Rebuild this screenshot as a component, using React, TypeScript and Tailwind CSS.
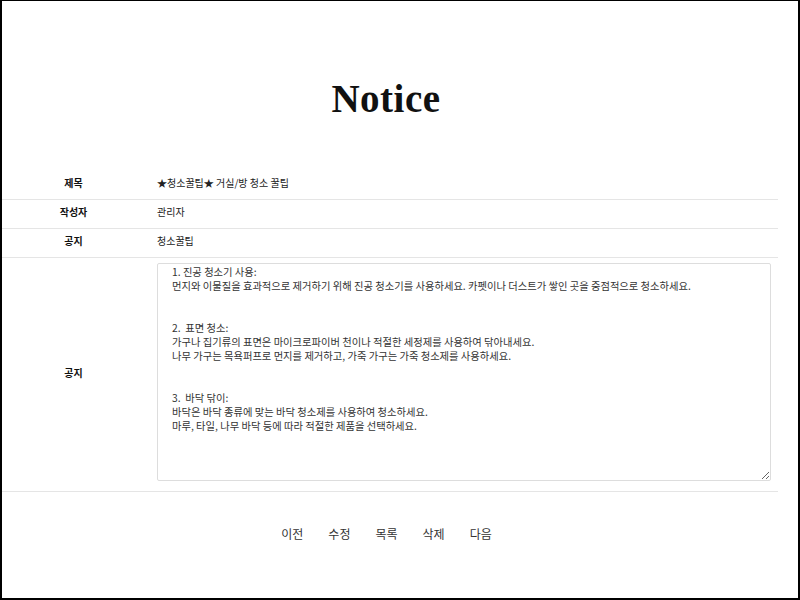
import React from 'react';

const content = `1. 진공 청소기 사용:
먼지와 이물질을 효과적으로 제거하기 위해 진공 청소기를 사용하세요. 카펫이나 더스트가 쌓인 곳을 중점적으로 청소하세요.


2.  표면 청소:
가구나 집기류의 표면은 마이크로파이버 천이나 적절한 세정제를 사용하여 닦아내세요.
나무 가구는 목욕퍼프로 먼지를 제거하고, 가죽 가구는 가죽 청소제를 사용하세요.


3.  바닥 닦이:
바닥은 바닥 종류에 맞는 바닥 청소제를 사용하여 청소하세요.
마루, 타일, 나무 바닥 등에 따라 적절한 제품을 선택하세요.`;

const kr = "font-['Noto_Sans_CJK_KR',sans-serif]";

function Row({ label, children, h = 'h-[29px]' }: { label: string; children: React.ReactNode; h?: string }) {
  return (
    <div className={`flex items-center ${h} pb-[5px] border-b border-[#e5e5e5]`}>
      <div className="w-[143px] text-center text-[10px] font-bold text-[#111]">{label}</div>
      <div className="pl-[12px] text-[10px] text-[#222]">{children}</div>
    </div>
  );
}

export default function App() {
  return (
    <div className={`h-[600px] w-[800px] bg-white border-t border-l-2 border-r-2 border-b-2 border-black ${kr}`}>
      <div className="w-[776px]">
        <h1 className="pt-[76px] pr-[8px] h-[169px] text-center text-[39px] leading-[44px] font-bold tracking-[0.5px] text-[#111] font-['Liberation_Serif',serif]">
          Notice
        </h1>
        <Row label="제목" h="h-[30px]">★청소꿀팁★ 거실/방 청소 꿀팁</Row>
        <Row label="작성자">관리자</Row>
        <Row label="공지">청소꿀팁</Row>
        <div className="flex items-center border-b border-[#e5e5e5] pt-[5px] pb-[10px]">
          <div className="w-[143px] text-center text-[10px] font-bold text-[#111]">공지</div>
          <div className="pl-[12px]">
            <textarea
              readOnly
              value={content}
              className="block w-[614px] h-[218px] border border-[#ddd] rounded-[2px] pt-[1px] px-[14px] text-[10.3px] leading-[14px] text-[#333] resize-y outline-none"
            />
          </div>
        </div>
        <div className="flex justify-center gap-[25px] pt-[33px] pr-[7px] text-[12px] text-[#333]">
          {['이전', '수정', '목록', '삭제', '다음'].map((b) => (
            <a key={b} href="#">{b}</a>
          ))}
        </div>
      </div>
    </div>
  );
}
